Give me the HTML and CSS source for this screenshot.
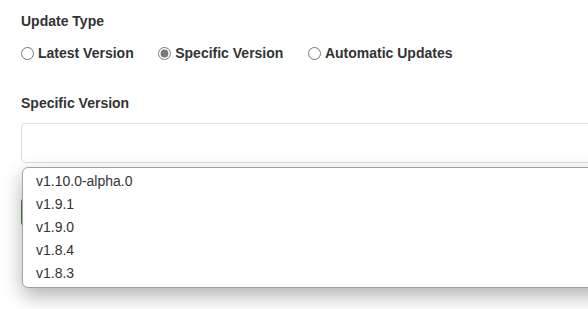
FILE: index.html
```html
<!DOCTYPE html>
<html lang="en">
<head>
    <meta charset="UTF-8">
    <meta name="viewport" content="width=device-width, initial-scale=1.0">
    <title>Update Settings</title>
    <link rel="stylesheet" href="styles.css">
</head>
<body>
    <div class="pagina">
        <div class="painel">
            <div class="campo">
                <div class="rotulo">Update Type</div>
                <div class="opcoes">
                    <label class="opcao"><input type="radio" name="tipo"> Latest Version</label>
                    <label class="opcao"><input type="radio" name="tipo" checked> Specific Version</label>
                    <label class="opcao"><input type="radio" name="tipo"> Automatic Updates</label>
                </div>
            </div>

            <div class="campo campo-versao">
                <div class="rotulo">Specific Version</div>
                <div class="seletor">
                    <div class="caixa"></div>
                    <ul class="lista">
                        <li>v1.10.0-alpha.0</li>
                        <li>v1.9.1</li>
                        <li>v1.9.0</li>
                        <li>v1.8.4</li>
                        <li>v1.8.3</li>
                    </ul>
                </div>
                <div class="barra-botao"></div>
            </div>
        </div>
    </div>
</body>
</html>
```

FILE: styles.css
```css
body {
    font-family: "Liberation Sans", Arial, sans-serif;
    background-color: #ffffff;
    color: #333;
    margin: 0;
}

.pagina {
    min-height: 100vh;
    overflow: hidden;
}

.painel {
    padding: 11px 0 0 21px;
    margin-right: -40px;
}

.rotulo {
    font-size: 14px;
    font-weight: bold;
    line-height: 20px;
}

.opcoes {
    display: flex;
    gap: 24.5px;
    margin-top: 12px;
}

.opcao {
    display: flex;
    align-items: center;
    gap: 4px;
    font-size: 14px;
    font-weight: bold;
    line-height: 20px;
}

.opcao input {
    margin: 0;
    width: 13px;
    height: 13px;
    accent-color: #7a7a7a;
}

.campo-versao {
    margin-top: 30px;
}

.seletor {
    position: relative;
    margin-top: 10px;
}

.caixa {
    height: 38px;
    border: 1px solid #dddddd;
    border-radius: 4px;
}

.lista {
    position: absolute;
    top: 44px;
    left: 1px;
    right: 0;
    margin: 0;
    padding: 2px 0;
    list-style: none;
    background-color: #fff;
    border: 1px solid #a3a3a3;
    border-radius: 6px;
    box-shadow: 0 8px 20px rgba(0, 0, 0, 0.3);
    z-index: 2;
}

.lista li {
    font-size: 14px;
    line-height: 23px;
    padding-left: 13px;
    color: #333;
}

.barra-botao {
    margin-top: 35px;
    width: 80px;
    height: 28px;
    background-color: #4a8a3a;
    border-radius: 4px;
}
```
